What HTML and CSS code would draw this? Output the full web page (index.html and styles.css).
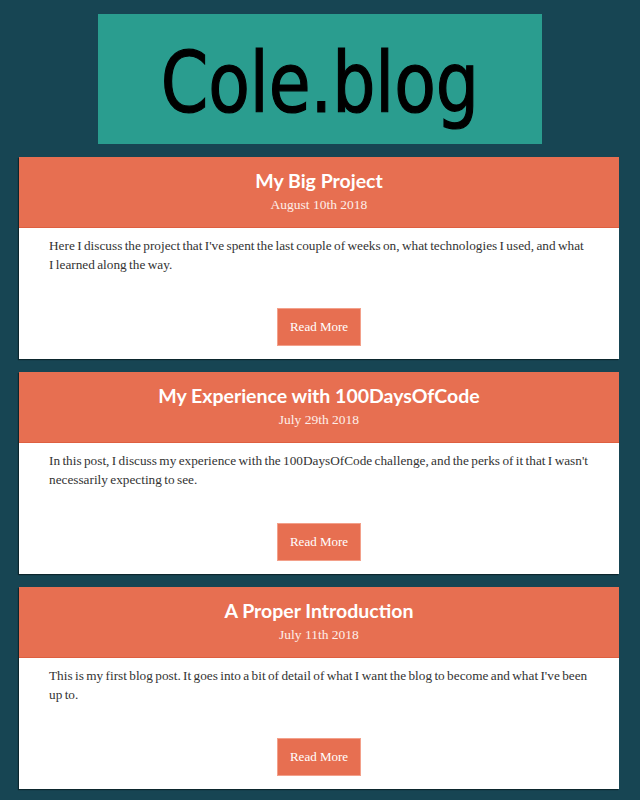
FILE: index.html
```html
<!DOCTYPE html>
<html lang="en">
<head>
<meta charset="utf-8">
<title>Cole.blog</title>
<link rel="stylesheet" href="styles.css">
</head>
<body>
  <header class="logo">
    <h1 class="logo-text">Cole.blog</h1>
  </header>
  <main class="posts">
    <article class="post">
      <div class="post-head">
        <h2 class="post-title">My Big Project</h2>
        <div class="post-date">August 10th 2018</div>
      </div>
      <div class="post-body">
        <p class="post-excerpt">Here I discuss the project that I've spent the last couple of weeks on, what technologies I used, and what I learned along the way.</p>
        <a class="read-more" href="#">Read More</a>
      </div>
    </article>
    <article class="post">
      <div class="post-head">
        <h2 class="post-title">My Experience with 100DaysOfCode</h2>
        <div class="post-date">July 29th 2018</div>
      </div>
      <div class="post-body">
        <p class="post-excerpt">In this post, I discuss my experience with the 100DaysOfCode challenge, and the perks of it that I wasn't necessarily expecting to see.</p>
        <a class="read-more" href="#">Read More</a>
      </div>
    </article>
    <article class="post">
      <div class="post-head">
        <h2 class="post-title">A Proper Introduction</h2>
        <div class="post-date">July 11th 2018</div>
      </div>
      <div class="post-body">
        <p class="post-excerpt">This is my first blog post. It goes into a bit of detail of what I want the blog to become and what I've been up to.</p>
        <a class="read-more" href="#">Read More</a>
      </div>
    </article>
  </main>
</body>
</html>
```

FILE: styles.css
```css
html, body {
  margin: 0;
  padding: 0;
}
body {
  background: #174553;
  font-family: "Liberation Serif", "Times New Roman", serif;
  padding: 14px 0 13px;
}
.logo {
  width: 444px;
  height: 130px;
  margin: 0 auto 13px;
  background: #2a9d8f;
  display: flex;
  align-items: center;
  justify-content: center;
}
.logo-text {
  margin: 0;
  padding-top: 8px;
  font-family: "DejaVu Sans Condensed", "DejaVu Sans", sans-serif;
  font-weight: normal;
  font-size: 84px;
  line-height: 1;
  color: #000;
  -webkit-text-stroke: 1.2px #000;
  transform: scaleX(0.9);
}
.posts {
  width: 600px;
  margin: 0 0 0 19px;
  display: flex;
  flex-direction: column;
  gap: 13px;
}
.post {
  background: #fff;
  box-shadow: -1px 1px 1px rgba(0, 0, 0, 0.45);
}
.post-head {
  background: #e76f51;
  padding: 12px 0 14px;
  text-align: center;
  border-bottom: 1px solid #de5f40;
  height: 44px;
}
.post-title {
  margin: 0;
  font-family: Lato, "Open Sans", sans-serif;
  font-weight: bold;
  font-size: 19.5px;
  line-height: 24px;
  color: #fff;
}
.post-date {
  margin-top: 3px;
  font-size: 13.5px;
  line-height: 18px;
  color: #fdeee9;
}
.post-body {
  padding: 8px 30px 13px;
  display: flex;
  flex-direction: column;
  align-items: center;
}
.post-excerpt {
  align-self: stretch;
  margin: 0 0 34px;
  font-size: 13.27px;
  word-spacing: -0.93px;
  line-height: 19px;
  color: #333;
}
.read-more {
  display: block;
  height: 36px;
  line-height: 36px;
  padding: 0 12px;
  background: #e76f51;
  border: 1px solid #f3a08a;
  color: #fff;
  font-size: 13px;
  text-decoration: none;
}
```
